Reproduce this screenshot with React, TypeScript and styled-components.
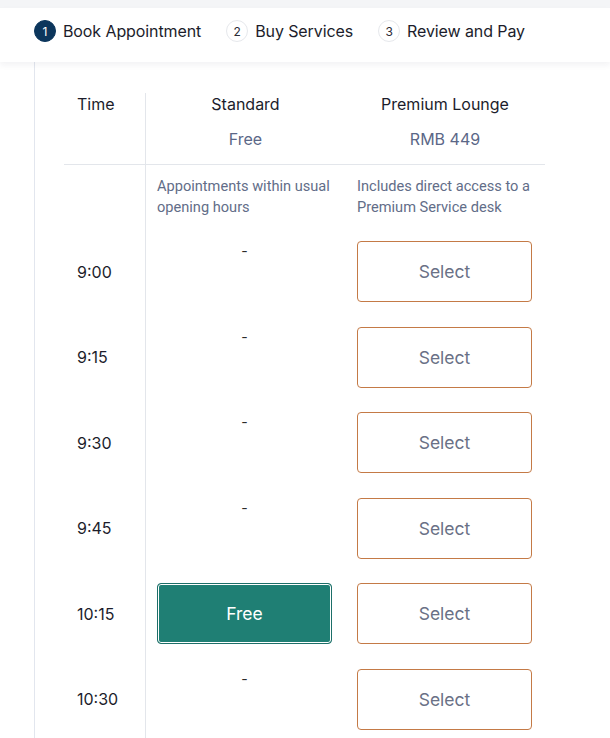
import React from "react";
import styled, { createGlobalStyle } from "styled-components";

const Global = createGlobalStyle`
  html, body { margin: 0; padding: 0; background: #ffffff; overflow: hidden; }
  body { font-family: Inter, "Noto Sans", Roboto, sans-serif; color: #1c1d2b; }
  * { box-sizing: border-box; }
`;

const TopStrip = styled.div`
  height: 8px;
  background: #f4f5f7;
`;

const Header = styled.header`
  height: 54px;
  background: #ffffff;
  box-shadow: 0 3px 6px rgba(30, 40, 60, 0.06);
  display: flex;
  align-items: center;
  gap: 25px;
  padding: 0 0 8px 34px;
  position: relative;
  z-index: 1;
`;

const Step = styled.div`
  display: flex;
  align-items: center;
  gap: 7px;
  font-size: 16px;
  color: #1c1d2b;
  letter-spacing: -0.1px;
`;

const StepNum = styled.span<{ $active?: boolean }>`
  width: 22px;
  height: 22px;
  border-radius: 50%;
  display: inline-flex;
  align-items: center;
  justify-content: center;
  font-size: 12px;
  background: ${(p) => (p.$active ? "#0c365c" : "#ffffff")};
  color: ${(p) => (p.$active ? "#ffffff" : "#2a2b36")};
  border: 1px solid ${(p) => (p.$active ? "#0c365c" : "#e6e8ec")};
`;

const Page = styled.main`
  margin-left: 34px;
  border-left: 1px solid #e2e6ee;
  padding: 31px 0 0 29px;
  min-height: 700px;
`;

const Table = styled.div`
  width: 481px;
`;

const Row = styled.div`
  display: grid;
  grid-template-columns: 81px 200px 200px;
`;

const HeadRow = styled(Row)`
  border-bottom: 1px solid #e3e6eb;
`;

const Cell = styled.div<{ $divider?: boolean }>`
  border-left: ${(p) => (p.$divider ? "1px solid #e3e6eb" : "none")};
`;

const TimeHead = styled(Cell)`
  padding-left: 13px;
  font-size: 16px;
  line-height: 22px;
  color: #1c1d2b;
`;

const PlanHead = styled(Cell)`
  display: flex;
  flex-direction: column;
  align-items: center;
  gap: 13px;
  padding-bottom: 14px;
`;

const PlanName = styled.div`
  font-size: 16px;
  line-height: 22px;
  color: #1c1d2b;
`;

const PlanPrice = styled.div`
  font-size: 16px;
  line-height: 22px;
  color: #5b6787;
`;

const DescCell = styled(Cell)<{ $left: number }>`
  padding: 11px 4px 23px ${(p) => p.$left}px;
  font-family: Roboto, "Noto Sans", sans-serif;
  font-size: 14.6px;
  line-height: 21px;
  color: #626d88;
`;

const SlotCell = styled(Cell)<{ $left: number }>`
  height: 85.6px;
  padding-left: ${(p) => p.$left}px;
`;

const TimeLabel = styled.div`
  height: 61px;
  display: flex;
  align-items: center;
  padding-left: 13px;
  font-size: 16px;
  color: #1c1d2b;
`;

const Dash = styled.div`
  width: 175px;
  text-align: center;
  font-size: 14px;
  line-height: 20px;
  color: #2b2b2b;
`;

const SlotButton = styled.button<{ $variant: "select" | "free" }>`
  width: 175px;
  height: 61px;
  border-radius: 4px;
  font-family: Inter, "Noto Sans", sans-serif;
  font-size: 17.5px;
  cursor: pointer;
  border: 1px solid ${(p) => (p.$variant === "free" ? "#1d6f69" : "#c47a46")};
  background: ${(p) => (p.$variant === "free" ? "#1f7f74" : "#ffffff")};
  color: ${(p) => (p.$variant === "free" ? "#ffffff" : "#6a7186")};
  box-shadow: ${(p) => (p.$variant === "free" ? "inset 0 0 0 1px #ffffff" : "none")};
`;

const slots: { time: string; standard: boolean }[] = [
  { time: "9:00", standard: false },
  { time: "9:15", standard: false },
  { time: "9:30", standard: false },
  { time: "9:45", standard: false },
  { time: "10:15", standard: true },
  { time: "10:30", standard: false },
];

export default function App() {
  return (
    <>
      <Global />
      <TopStrip />
      <Header>
        <Step>
          <StepNum $active>1</StepNum>
          Book Appointment
        </Step>
        <Step>
          <StepNum>2</StepNum>
          Buy Services
        </Step>
        <Step>
          <StepNum>3</StepNum>
          Review and Pay
        </Step>
      </Header>
      <Page>
        <Table>
          <HeadRow>
            <TimeHead>Time</TimeHead>
            <PlanHead $divider>
              <PlanName>Standard</PlanName>
              <PlanPrice>Free</PlanPrice>
            </PlanHead>
            <PlanHead>
              <PlanName>Premium Lounge</PlanName>
              <PlanPrice>RMB 449</PlanPrice>
            </PlanHead>
          </HeadRow>
          <Row>
            <Cell />
            <DescCell $divider $left={11}>
              Appointments within usual opening hours
            </DescCell>
            <DescCell $left={12}>
              Includes direct access to a Premium Service desk
            </DescCell>
          </Row>
          {slots.map((s) => (
            <Row key={s.time}>
              <Cell>
                <TimeLabel>{s.time}</TimeLabel>
              </Cell>
              <SlotCell $divider $left={11}>
                {s.standard ? (
                  <SlotButton $variant="free">Free</SlotButton>
                ) : (
                  <Dash>-</Dash>
                )}
              </SlotCell>
              <SlotCell $left={12}>
                <SlotButton $variant="select">Select</SlotButton>
              </SlotCell>
            </Row>
          ))}
        </Table>
      </Page>
    </>
  );
}
